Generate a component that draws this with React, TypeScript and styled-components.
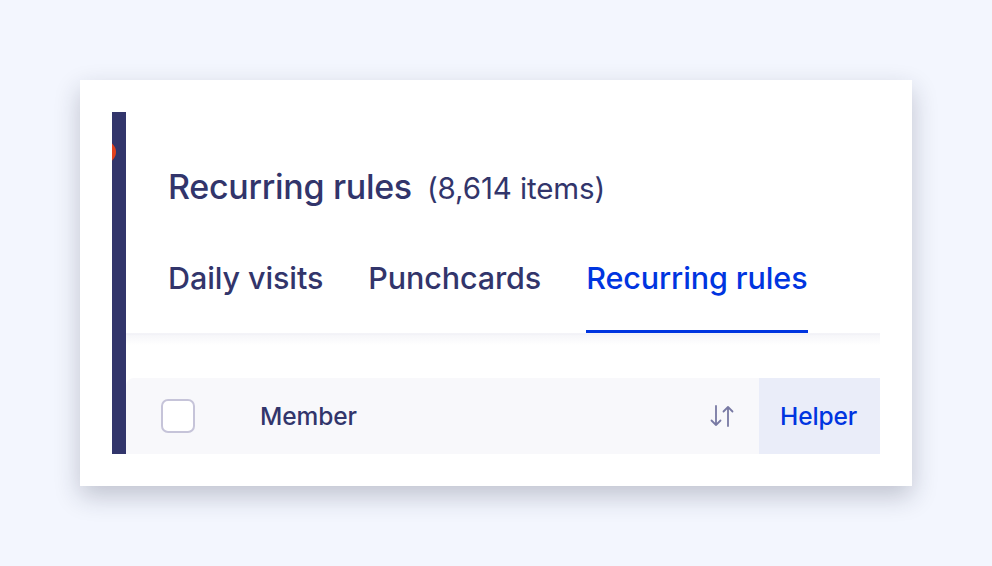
import React from 'react';
import styled, { createGlobalStyle } from 'styled-components';

const GlobalStyle = createGlobalStyle`
	body {
		margin: 0;
		background: #f3f6fe;
		font-family: Inter, "Noto Sans", sans-serif;
		color: #32356b;
	}
`;

const Page = styled.div`
	padding: 80px;
	width: 992px;
	height: 566px;
	box-sizing: border-box;
`;

const Card = styled.div`
	background: #fff;
	padding: 32px;
	box-shadow: 0 10px 24px rgba(30, 34, 60, 0.24);
	width: 832px;
	height: 406px;
	box-sizing: border-box;
`;

const Frame = styled.div`
	position: relative;
	overflow: hidden;
	height: 342px;
	display: flex;
`;

const SideBar = styled.div`
	flex: 0 0 14px;
	background: #32356b;
`;

const Dot = styled.span`
	position: absolute;
	left: -18px;
	top: 29px;
	width: 22px;
	height: 22px;
	border-radius: 50%;
	background: #e2401d;
`;

const Content = styled.div`
	flex: 1;
	display: flex;
	flex-direction: column;
	min-width: 0;
`;

const Heading = styled.h1`
	margin: 0;
	padding: 55px 0 0 42px;
	display: flex;
	align-items: baseline;
	gap: 15px;
	font-size: 34px;
	font-weight: 500;
	letter-spacing: -0.3px;
	line-height: 40px;
`;

const Count = styled.span`
	font-size: 29.5px;
	font-weight: 400;
	letter-spacing: -0.1px;
`;

const Tabs = styled.nav`
	display: flex;
	gap: 45px;
	padding: 52px 0 0 42px;
	border-bottom: 2px solid #e9e9f1;
	position: relative;

	&::after {
		content: '';
		position: absolute;
		left: 0;
		right: 0;
		top: 100%;
		height: 12px;
		background: linear-gradient(#f4f4f8, rgba(255, 255, 255, 0));
	}
`;

const Tab = styled.a<{ $active?: boolean }>`
	display: block;
	font-size: 30.5px;
	font-weight: 500;
	letter-spacing: -0.1px;
	line-height: 36px;
	padding-bottom: 34px;
	color: ${p => (p.$active ? '#0035e0' : '#32356b')};
	border-bottom: 3px solid ${p => (p.$active ? '#0035e0' : 'transparent')};
	text-decoration: none;
`;

const HeaderRow = styled.div`
	margin-top: 43px;
	height: 76px;
	display: flex;
	align-items: center;
	background: #f8f8fb;
	border-top-left-radius: 8px;
`;

const CheckCell = styled.div`
	width: 134px;
	padding-left: 35px;
	box-sizing: border-box;
	display: flex;
	align-items: center;
`;

const Checkbox = styled.span`
	width: 34px;
	height: 34px;
	box-sizing: border-box;
	border: 2px solid #c6c4d9;
	border-radius: 7px;
	background: #fff;
`;

const HeadCell = styled.div<{ $highlight?: boolean }>`
	height: 100%;
	display: flex;
	align-items: center;
	justify-content: space-between;
	font-size: 24.5px;
	font-weight: 500;
	letter-spacing: -0.1px;
	color: ${p => (p.$highlight ? '#0035e0' : '#32356b')};
	background: ${p => (p.$highlight ? '#eaedf9' : 'transparent')};
	padding: ${p => (p.$highlight ? '0 18px 0 21px' : '0 24px 0 0')};
	flex: ${p => (p.$highlight ? '1' : '0 0 499px')};
	box-sizing: border-box;
`;

const SortIcon = () => (
	<svg width="26" height="24" viewBox="0 0 26 24" fill="none" stroke="#7879a3" strokeWidth="1.8" strokeLinecap="round" strokeLinejoin="round">
		<path d="M7 2v19M2.5 16.5 7 21l4.5-4.5" />
		<path d="M19 22V3M14.5 7.5 19 3l4.5 4.5" />
	</svg>
);

export default function App() {
	return (
		<Page>
			<GlobalStyle />
			<Card>
				<Frame>
					<SideBar />
					<Dot />
					<Content>
						<Heading>
							Recurring rules <Count>(8,614 items)</Count>
						</Heading>
						<Tabs>
							<Tab>Daily visits</Tab>
							<Tab>Punchcards</Tab>
							<Tab $active>Recurring rules</Tab>
						</Tabs>
						<HeaderRow>
							<CheckCell>
								<Checkbox />
							</CheckCell>
							<HeadCell>
								Member
								<SortIcon />
							</HeadCell>
							<HeadCell $highlight>Helper</HeadCell>
						</HeaderRow>
					</Content>
				</Frame>
			</Card>
		</Page>
	);
}
